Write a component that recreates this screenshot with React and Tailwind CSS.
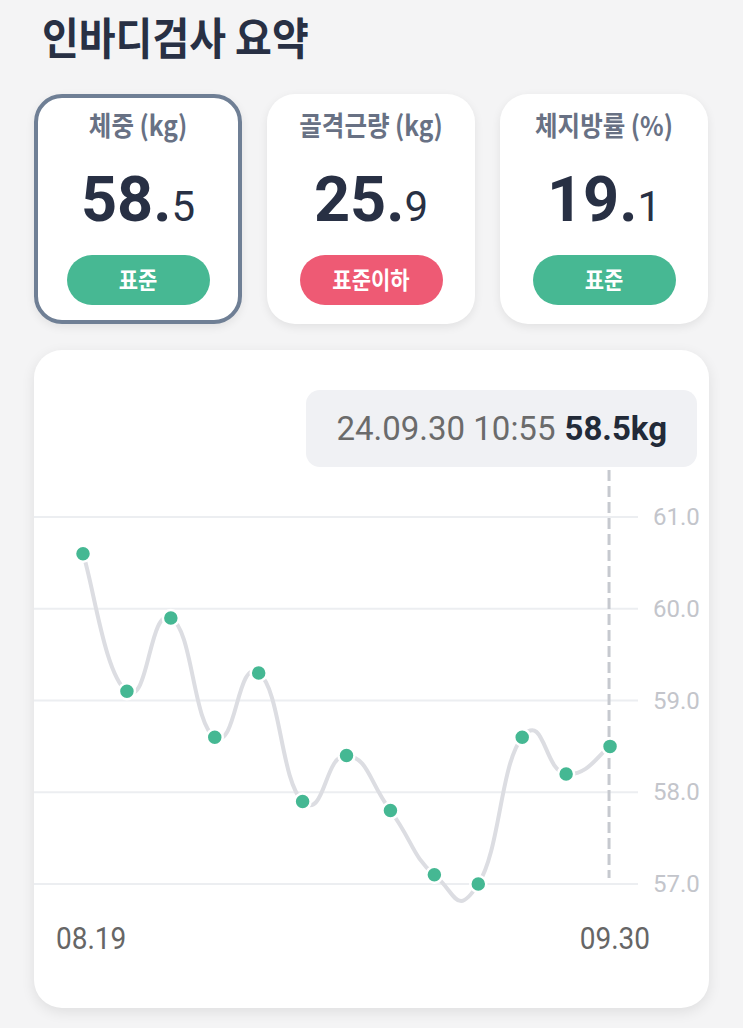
import React from "react";

const vals = [60.6, 59.1, 59.9, 58.6, 59.3, 57.9, 58.4, 57.8, 57.1, 57.0, 58.6, 58.2, 58.5];
const gridVals = [61, 60, 59, 58, 57];
const yOf = (v) => 417 - (v - 57) * 91.75;
const xOf = (i) => 49 + i * 43.92;

function buildPath(pts, k) {
  let d = `M ${pts[0].x} ${pts[0].y}`;
  for (let j = 1; j < pts.length; j++) {
    const pp = pts[Math.max(j - 2, 0)];
    const p = pts[j - 1];
    const c = pts[j];
    const n = pts[Math.min(j + 1, pts.length - 1)];
    const c1x = p.x + (c.x - pp.x) * k;
    const c1y = p.y + (c.y - pp.y) * k;
    const c2x = c.x - (n.x - p.x) * k;
    const c2y = c.y - (n.y - p.y) * k;
    d += ` C ${c1x} ${c1y}, ${c2x} ${c2y}, ${c.x} ${c.y}`;
  }
  return d;
}

function StatCard({ label, whole, dec, status, selected, red }) {
  return (
    <div
      className={
        selected
          ? "flex h-[230px] w-[208px] flex-col items-center rounded-[28px] border-[4px] border-[#6f7f95] bg-white pt-[12px] shadow-[0_3px_10px_rgba(0,0,0,0.08)]"
          : "flex h-[230px] w-[208px] flex-col items-center rounded-[28px] border-[4px] border-transparent bg-white pt-[12px] shadow-[0_3px_10px_rgba(0,0,0,0.08)]"
      }
    >
      <div className="h-[30px] whitespace-nowrap text-[24.5px] font-bold leading-[30px] text-[#687184]">
        <span className="inline-block scale-y-[1.12]">{label}</span>
      </div>
      <div className="mt-[30px] flex h-[60px] items-baseline font-['Roboto'] leading-[60px] text-[#283044]">
        <span className="text-[63px] font-bold">{whole}.</span>
        <span className="text-[42px] font-normal">{dec}</span>
      </div>
      <div
        className={
          red
            ? "mt-[25px] flex h-[50px] w-[143px] items-center justify-center rounded-full bg-[#ee5a74] text-[21px] font-bold text-white"
            : "mt-[25px] flex h-[50px] w-[143px] items-center justify-center rounded-full bg-[#47b893] text-[21px] font-bold text-white"
        }
      >
        <span className="inline-block scale-y-[1.12]">{status}</span>
      </div>
    </div>
  );
}

export default function App() {
  const pts = vals.map((v, i) => ({ x: xOf(i), y: yOf(v) }));
  const path = buildPath(pts, 0.25);
  const last = pts[pts.length - 1];

  return (
    <div className="min-h-[1028px] w-full bg-[#f4f4f5] px-[34px] pt-[12px] font-['Noto_Sans_CJK_KR','Noto_Sans',sans-serif]">
      <h1 className="h-[48px] whitespace-nowrap pl-[8px] text-[40px] font-bold leading-[48px] text-[#283044]">
        <span className="inline-block scale-y-[1.1]">인바디검사 요약</span>
      </h1>

      <div className="mt-[34px] flex gap-[25px]">
        <StatCard label="체중 (kg)" whole="58" dec="5" status="표준" selected />
        <StatCard label="골격근량 (kg)" whole="25" dec="9" status="표준이하" red />
        <StatCard label="체지방률 (%)" whole="19" dec="1" status="표준" />
      </div>

      <div className="mt-[26px] flex h-[658px] w-[675px] flex-col rounded-[28px] bg-white pt-[40px] shadow-[0_4px_14px_rgba(0,0,0,0.09)]">
        <div className="flex justify-end pr-[12px]">
          <div className="flex h-[77px] items-center gap-[9px] whitespace-nowrap rounded-[14px] bg-[#f0f1f4] px-[30px] font-['Roboto'] text-[33px] leading-none">
            <span className="font-normal text-[#6b6b6b]">24.09.30 10:55</span>
            <span className="font-bold text-[#222a38]">58.5kg</span>
          </div>
        </div>

        <svg width="675" height="443" viewBox="0 0 675 443" className="block">
          {gridVals.map((g) => (
            <line key={g} x1="0" x2="604" y1={yOf(g)} y2={yOf(g)} stroke="#eceef1" strokeWidth="2" />
          ))}
          {gridVals.map((g) => (
            <text
              key={"t" + g}
              x="619"
              y={yOf(g)}
              dominantBaseline="central"
              fontFamily="Roboto, sans-serif"
              fontSize="24"
              fill="#c3c5cb"
            >
              {g.toFixed(1)}
            </text>
          ))}
          <line
            x1={last.x - 1}
            x2={last.x - 1}
            y1="3"
            y2="411"
            stroke="#c6c9cf"
            strokeWidth="3"
            strokeDasharray="11 5"
          />
          <path d={path} fill="none" stroke="#dcdde2" strokeWidth="4" strokeLinecap="round" />
          {pts.map((p, i) => (
            <circle key={i} cx={p.x} cy={p.y} r="8" fill="#45b893" stroke="#ffffff" strokeWidth="2.5" />
          ))}
        </svg>

        <div className="mt-[12px] flex justify-between pl-[22px] pr-[59px] font-['Roboto'] text-[28px] leading-[34px] text-[#666666]">
          <span className="inline-block scale-y-[1.14]">08.19</span>
          <span className="inline-block scale-y-[1.14]">09.30</span>
        </div>
      </div>
    </div>
  );
}
